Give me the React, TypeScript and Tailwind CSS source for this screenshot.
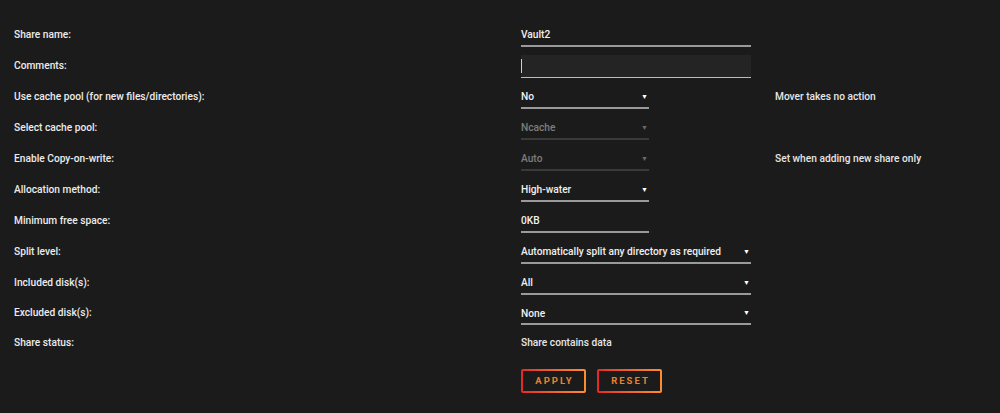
import { FC } from 'react';

interface Row {
  label: string;
  value?: string;
  kind: 'text' | 'select' | 'plain' | 'focus';
  width?: 'short' | 'long';
  disabled?: boolean;
  remark?: string;
}

const rows: Row[] = [
  { label: 'Share name:', value: 'Vault2', kind: 'text', width: 'long' },
  { label: 'Comments:', value: '', kind: 'focus', width: 'long' },
  { label: 'Use cache pool (for new files/directories):', value: 'No', kind: 'select', width: 'short', remark: 'Mover takes no action' },
  { label: 'Select cache pool:', value: 'Ncache', kind: 'select', width: 'short', disabled: true },
  { label: 'Enable Copy-on-write:', value: 'Auto', kind: 'select', width: 'short', disabled: true, remark: 'Set when adding new share only' },
  { label: 'Allocation method:', value: 'High-water', kind: 'select', width: 'short' },
  { label: 'Minimum free space:', value: '0KB', kind: 'text', width: 'short' },
  { label: 'Split level:', value: 'Automatically split any directory as required', kind: 'select', width: 'long' },
  { label: 'Included disk(s):', value: 'All', kind: 'select', width: 'long' },
  { label: 'Excluded disk(s):', value: 'None', kind: 'select', width: 'long' },
  { label: 'Share status:', value: 'Share contains data', kind: 'plain' },
];

const Field: FC<{ row: Row }> = ({ row }) => {
  const w = row.width === 'short' ? 'w-[128px]' : 'w-[230px]';
  if (row.kind === 'plain') {
    return <span className="text-[#e6e6e6]">{row.value}</span>;
  }
  if (row.kind === 'focus') {
    return (
      <div className={`${w} h-[23px] mt-[2px] bg-[#242424] border-b border-[#bdbdbd] flex items-center`}>
        <span className="w-px h-[14px] bg-[#d0d0d0]" />
      </div>
    );
  }
  const line = row.disabled ? 'border-[#3a3a3a]' : 'border-[#9a9a9a]';
  const text = row.disabled ? 'text-[#7d7d7d]' : 'text-[#f0f0f0]';
  return (
    <div className={`${w} h-[24px] pt-[3px] border-b-2 ${line} flex items-center justify-between whitespace-nowrap ${text}`}>
      <span>{row.value}</span>
      {row.kind === 'select' && (
        <span className={`text-[7px] mr-[1px] ${row.disabled ? 'text-[#6a6a6a]' : 'text-white'}`}>▼</span>
      )}
    </div>
  );
};

const App: FC = () => {
  return (
    <div
      className="w-[1000px] h-[413px] bg-[#1c1b1b] text-[10.2px] font-medium text-[#ececec] pt-[19px]"
      style={{ fontFamily: 'Roboto, "Open Sans", sans-serif' }}
    >
      {rows.map((row, i) => (
        <div key={row.label} className={`flex items-center ${i >= 9 ? 'h-[30px]' : 'h-[31px]'}`}>
          <div className="w-[521px] pl-[14px]">{row.label}</div>
          <div className="w-[254px] flex items-center">
            <Field row={row} />
          </div>
          {row.remark && <div className="text-[#e6e6e6]">{row.remark}</div>}
        </div>
      ))}
      <div className="flex gap-[11px] pl-[521px] mt-[11px]">
        {['APPLY', 'RESET'].map((b) => (
          <div key={b} className="p-[2px] rounded-[2px] bg-gradient-to-r from-[#e22828] to-[#ff8c2f]">
            <div className="w-[61px] h-[20px] bg-[#1c1b1b] flex items-center justify-center">
              <span className="text-[9.5px] font-bold tracking-[2px] pl-[2px] text-[#e8822c]">
                {b}
              </span>
            </div>
          </div>
        ))}
      </div>
    </div>
  );
};

export default App;
